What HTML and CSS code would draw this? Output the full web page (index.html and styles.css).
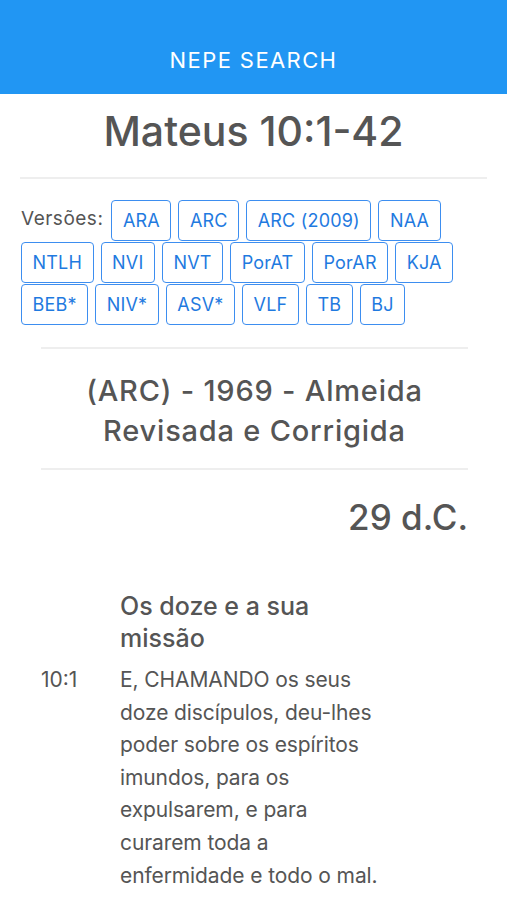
FILE: index.html
```html
<!DOCTYPE html>
<html lang="pt">
<head>
  <meta charset="UTF-8">
  <meta name="viewport" content="width=device-width, initial-scale=1.0">
  <title>NEPE Search - Mateus 10:1-42</title>
  <link rel="stylesheet" href="styles.css">
</head>
<body>
  <header class="topbar">
    <span class="brand">NEPE SEARCH</span>
  </header>

  <main class="page">
    <h1 class="ref-title">Mateus 10:1-42</h1>
    <hr class="rule rule-wide">

    <div class="versions">
      <span class="versions-label">Versões:</span>
      <a class="ver-btn" href="#">ARA</a>
      <a class="ver-btn" href="#">ARC</a>
      <a class="ver-btn" href="#">ARC (2009)</a>
      <a class="ver-btn" href="#">NAA</a>
      <a class="ver-btn" href="#">NTLH</a>
      <a class="ver-btn" href="#">NVI</a>
      <a class="ver-btn" href="#">NVT</a>
      <a class="ver-btn" href="#">PorAT</a>
      <a class="ver-btn" href="#">PorAR</a>
      <a class="ver-btn" href="#">KJA</a>
      <a class="ver-btn" href="#">BEB*</a>
      <a class="ver-btn" href="#">NIV*</a>
      <a class="ver-btn" href="#">ASV*</a>
      <a class="ver-btn" href="#">VLF</a>
      <a class="ver-btn" href="#">TB</a>
      <a class="ver-btn" href="#">BJ</a>
    </div>

    <section class="reading">
      <hr class="rule">
      <h2 class="version-name">(ARC) - 1969 - Almeida Revisada e Corrigida</h2>
      <hr class="rule">
      <div class="date">29 d.C.</div>

      <div class="passage">
        <div></div>
        <h3 class="pericope">Os doze e a sua missão</h3>

        <span class="verse-num">10:1</span>
        <p class="verse-text">E, CHAMANDO os seus doze discípulos, deu-lhes poder sobre os espíritos imundos, para os expulsarem, e para curarem toda a enfermidade e todo o mal.</p>
      </div>
    </section>
  </main>
</body>
</html>
```

FILE: styles.css
```css
body {
  margin: 0;
  font-family: Inter, "Noto Sans", sans-serif;
  color: #555;
  background: #fff;
}

.topbar {
  height: 94px;
  box-sizing: border-box;
  padding-top: 26px;
  display: flex;
  align-items: center;
  justify-content: center;
  background-color: #2196f3;
}

.brand {
  color: #fff;
  font-size: 22px;
  letter-spacing: 1.4px;
}

.ref-title {
  margin: 9px 0 0;
  text-align: center;
  font-size: 41px;
  font-weight: 500;
  line-height: 56px;
}

.rule {
  margin: 0;
  border: none;
  border-top: 2px solid #eee;
}

.rule-wide {
  margin: 18px 20px 0;
}

.versions {
  display: flex;
  flex-wrap: wrap;
  gap: 1px 7px;
  padding: 21px 20px 0 21px;
}

.versions-label {
  font-size: 19px;
  letter-spacing: 0.5px;
  padding-top: 7px;
  margin-right: 1px;
}

.ver-btn {
  display: inline-flex;
  align-items: center;
  height: 41px;
  box-sizing: border-box;
  padding: 0 10.5px;
  border: 1.5px solid #3d8ef0;
  border-radius: 4px;
  color: #1f7ae0;
  font-size: 18px;
  letter-spacing: 0.2px;
  text-decoration: none;
}

.reading {
  margin: 22px 39px 0 41px;
}

.version-name {
  margin: 22px 0 17px;
  text-align: center;
  font-size: 29px;
  font-weight: 500;
  letter-spacing: 0.8px;
  line-height: 40px;
}

.date {
  margin-top: 26px;
  text-align: right;
  font-size: 35px;
  font-weight: 500;
}

.passage {
  display: grid;
  grid-template-columns: 79px 262px;
  margin-top: 52px;
}

.pericope {
  margin: 0 0 10px;
  font-size: 25px;
  font-weight: 500;
  line-height: 32px;
}

.verse-num {
  font-size: 21px;
  line-height: 32.6px;
}

.verse-text {
  margin: 0;
  font-size: 21px;
  letter-spacing: -0.1px;
  line-height: 32.6px;
}
```
